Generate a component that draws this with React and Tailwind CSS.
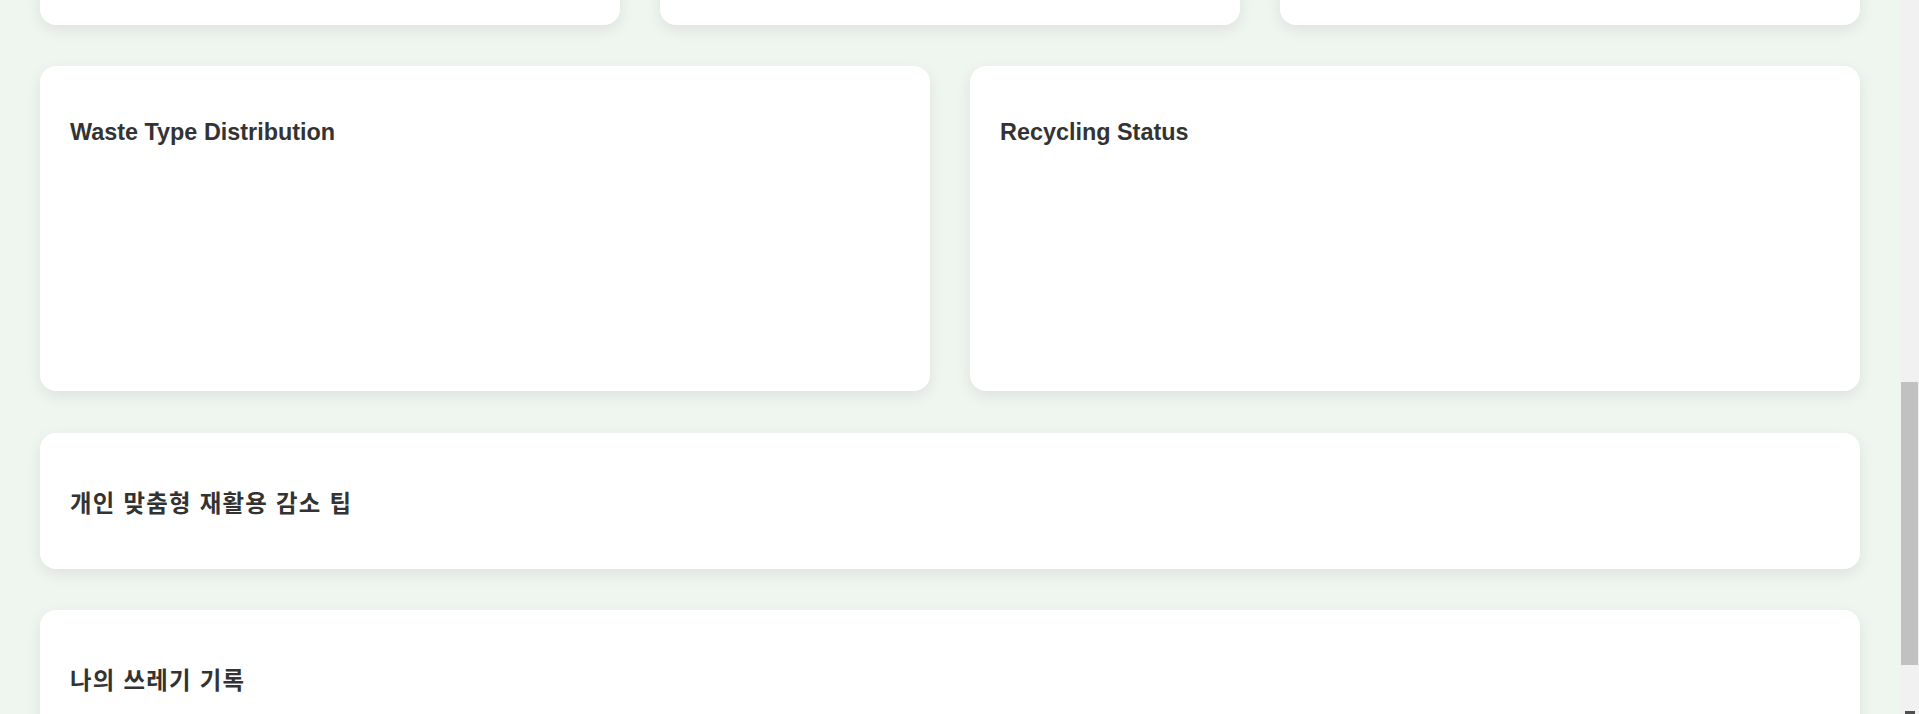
import React from "react";

const cardCls =
  "bg-white rounded-2xl shadow-[0_5px_15px_rgba(0,0,0,0.08)] px-[30px] pb-[30px]";

function Card({ title, korean = false, className = "" }) {
  return (
    <div className={`${cardCls} ${korean ? "pt-[58px]" : "pt-[53px]"} ${className}`}>
      <h3
        className={`text-[23.4px] leading-[27px] font-bold text-[#333333] m-0 ${
          korean ? "tracking-[1.3px]" : ""
        }`}
      >
        {title}
      </h3>
    </div>
  );
}

export default function App() {
  return (
    <div
      className="flex h-[714px] w-full overflow-hidden bg-[#eff6ef]"
      style={{ fontFamily: '"Liberation Sans", "Noto Sans CJK KR", Arial, sans-serif' }}
    >
      <main className="flex-1 px-[40px]">
        <div className="-mt-[135px] flex flex-col">
          <div className="grid grid-cols-3 gap-[40px]">
            <div className="h-[160px] bg-white rounded-2xl shadow-[0_5px_15px_rgba(0,0,0,0.08)]" />
            <div className="h-[160px] bg-white rounded-2xl shadow-[0_5px_15px_rgba(0,0,0,0.08)]" />
            <div className="h-[160px] bg-white rounded-2xl shadow-[0_5px_15px_rgba(0,0,0,0.08)]" />
          </div>
          <div className="mt-[41px] grid grid-cols-2 gap-[40px]">
            <Card title="Waste Type Distribution" className="h-[325px]" />
            <Card title="Recycling Status" className="h-[325px]" />
          </div>
          <Card title="개인 맞춤형 재활용 감소 팁" korean className="mt-[42px] h-[136px]" />
          <Card title="나의 쓰레기 기록" korean className="mt-[41px] h-[300px]" />
        </div>
      </main>
      <aside className="w-[19px] shrink-0 bg-[#f1f1f1] flex flex-col">
        <div className="mt-[382px] ml-[1px] w-[17px] h-[283px] bg-[#c1c1c1]" />
        <div className="mt-auto flex justify-center">
          <svg width="10" height="3" viewBox="0 0 10 3" className="block">
            <rect x="0" y="0" width="10" height="3" fill="#505050" />
          </svg>
        </div>
      </aside>
    </div>
  );
}
